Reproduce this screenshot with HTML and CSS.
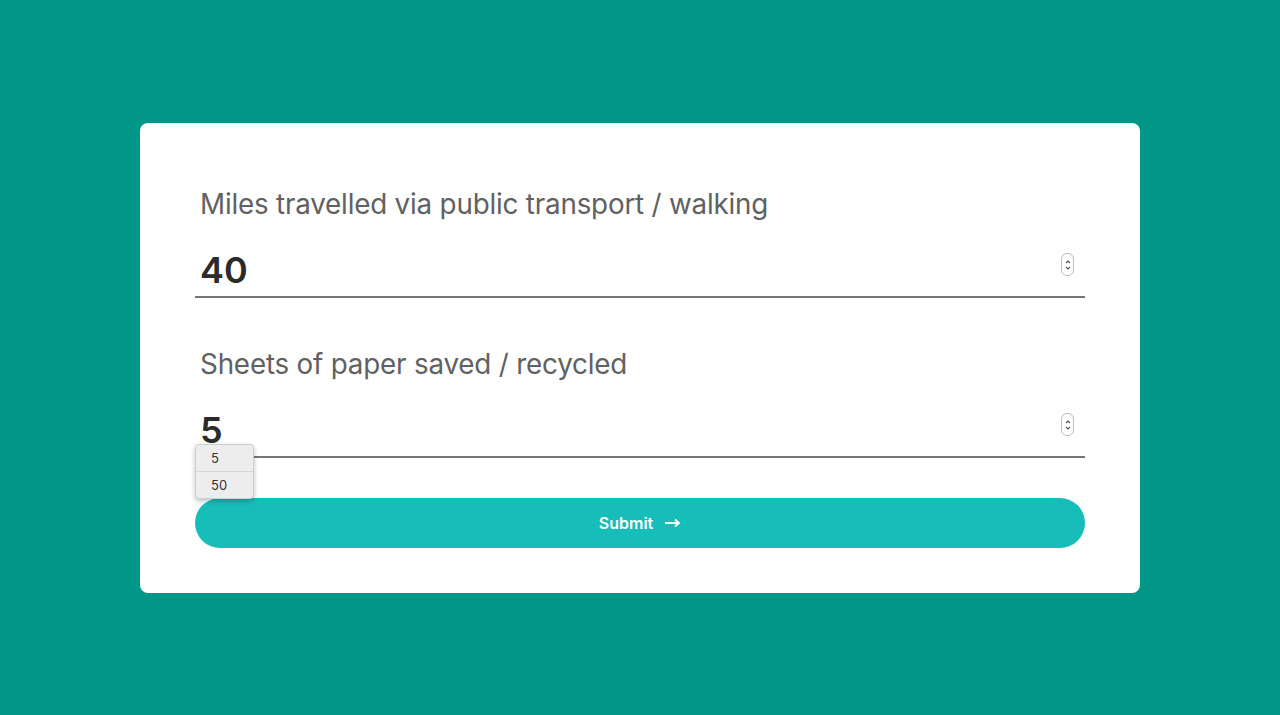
FILE: index.html
```html
<!DOCTYPE html>
<html lang="en">
<head>
<meta charset="utf-8">
<title>Carbon form</title>
<link rel="stylesheet" href="styles.css">
</head>
<body>
<main class="page">
  <form class="card">
    <div class="field">
      <label class="label">Miles travelled via public transport / walking</label>
      <div class="input">
        <span class="value">40</span>
        <span class="spinner"><svg width="6" height="14" viewBox="0 0 6 14"><path d="M1 5 L3 3 L5 5 M1 9 L3 11 L5 9" fill="none" stroke="#555" stroke-width="1.1"/></svg></span>
      </div>
    </div>
    <div class="field field-second">
      <label class="label">Sheets of paper saved / recycled</label>
      <div class="input">
        <span class="value">5</span>
        <span class="spinner"><svg width="6" height="14" viewBox="0 0 6 14"><path d="M1 5 L3 3 L5 5 M1 9 L3 11 L5 9" fill="none" stroke="#555" stroke-width="1.1"/></svg></span>
        <ul class="suggest">
          <li>5</li>
          <li>50</li>
        </ul>
      </div>
    </div>
    <button type="button" class="submit">Submit <svg class="arrow" width="16" height="10" viewBox="0 0 16 10"><path d="M0 5 H14 M10 1.5 L14 5 L10 8.5" fill="none" stroke="#fff" stroke-width="1.8"/></svg></button>
  </form>
</main>
</body>
</html>
```
FILE: styles.css
```css
html, body {
  margin: 0;
  padding: 0;
}
body {
  background: #009688;
  font-family: "Inter", "Open Sans", sans-serif;
}
.page {
  height: 715px;
  display: flex;
  justify-content: center;
  align-items: flex-start;
  padding-top: 123px;
  box-sizing: border-box;
}
.card {
  width: 1000px;
  height: 470px;
  box-sizing: border-box;
  background: #fff;
  border-radius: 8px;
  padding: 57px 55px 45px;
  display: flex;
  flex-direction: column;
}
.field {
  display: flex;
  flex-direction: column;
}
.field-second {
  margin-top: 42px;
}
.label {
  display: block;
  height: 40px;
  line-height: 40px;
  padding-top: 4px;
  padding-left: 5px;
  font-size: 27.8px;
  color: #616161;
  letter-spacing: -0.2px;
}
.input {
  position: relative;
  height: 72px;
  border-bottom: 2px solid #777;
  display: flex;
  align-items: flex-end;
  padding-left: 5px;
}
.value {
  font-size: 36px;
  font-weight: 600;
  color: #2b2b2b;
  line-height: 40px;
  padding-bottom: 6px;
}
.spinner {
  position: absolute;
  right: 11px;
  top: 29px;
  width: 11px;
  height: 21px;
  border: 1px solid #bbb;
  border-radius: 6px;
  display: flex;
  align-items: center;
  justify-content: center;
  background: #fff;
}
.suggest {
  position: absolute;
  left: 0;
  top: 60px;
  margin: 0;
  padding: 0;
  list-style: none;
  width: 57px;
  background: #ededed;
  border: 1px solid #cfcfcf;
  border-radius: 4px;
  box-shadow: 0 2px 5px rgba(0,0,0,0.25);
  z-index: 2;
  font-size: 13px;
  color: #333;
}
.suggest li {
  height: 26px;
  line-height: 26px;
  padding-left: 15px;
}
.suggest li + li {
  border-top: 1px solid #d6d6d6;
}
.submit {
  margin-top: 40px;
  height: 50px;
  border: none;
  border-radius: 25px;
  background: #17bdb8;
  color: #fff;
  font-family: inherit;
  font-size: 16px;
  font-weight: 600;
  display: flex;
  align-items: center;
  justify-content: center;
  gap: 12px;
  cursor: pointer;
}
.arrow {
  display: block;
}
```
